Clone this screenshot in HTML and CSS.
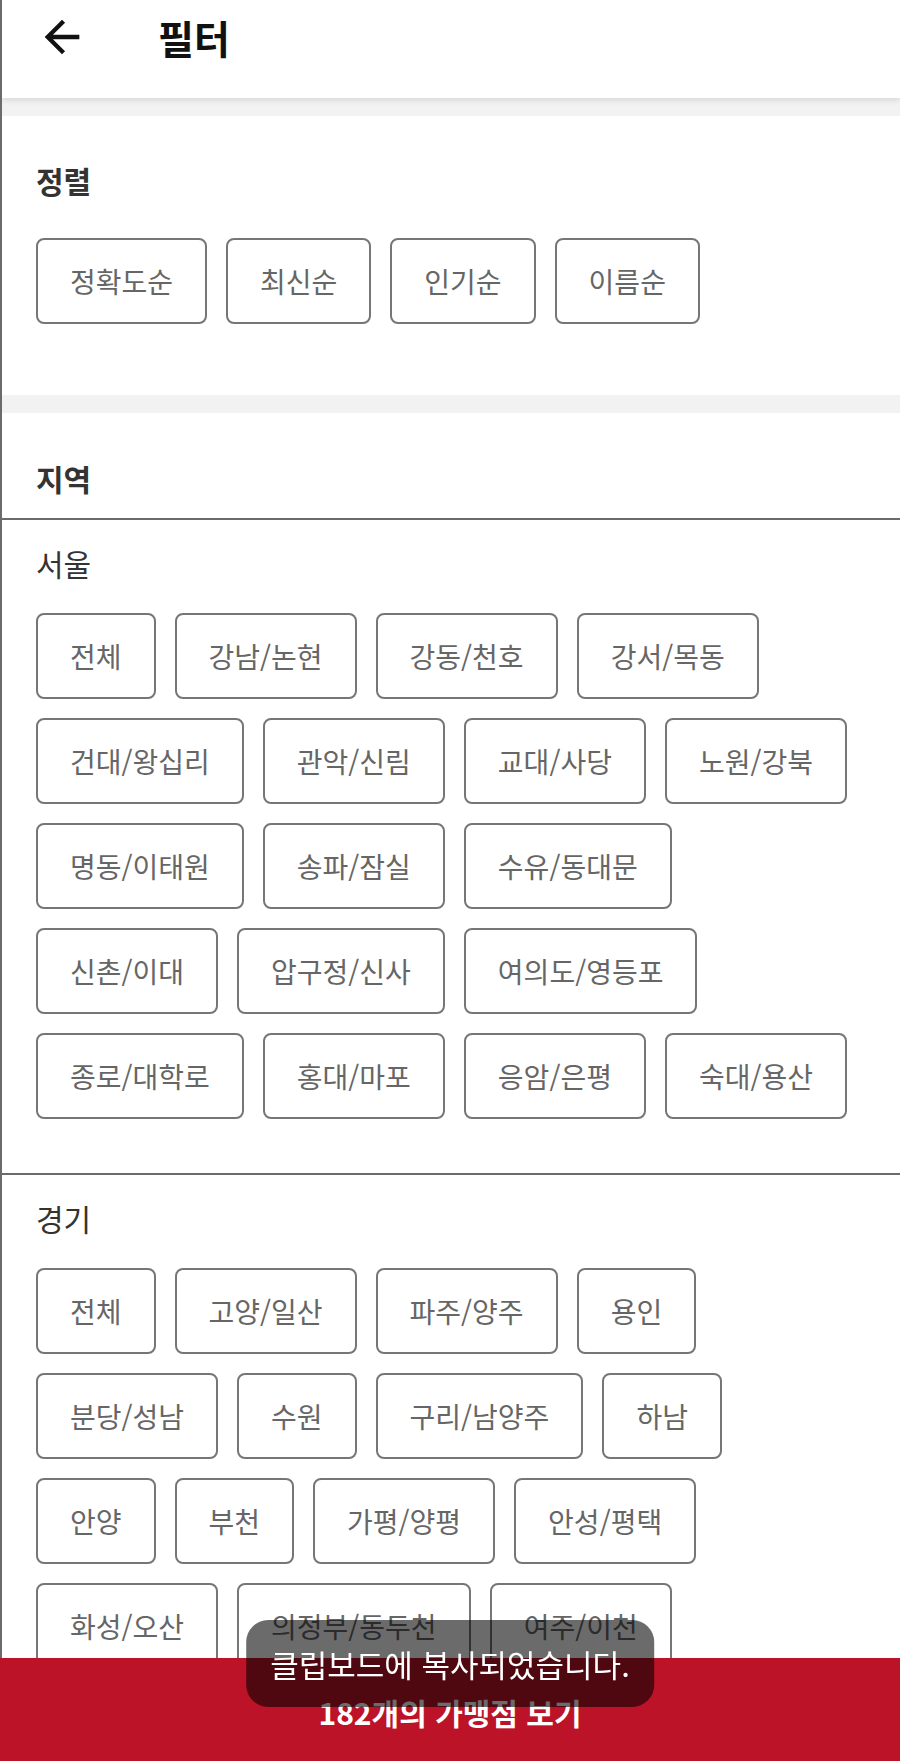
FILE: index.html
```html
<!DOCTYPE html>
<html lang="ko">
  <head>
    <meta charset="UTF-8" />
    <meta name="viewport" content="width=device-width, initial-scale=1.0" />
    <title>필터</title>
    <link rel="stylesheet" href="styles.css">
  </head>
  <body>
    <div class="page">
      <header class="topbar">
        <button class="back" aria-label="뒤로">
          <svg viewBox="0 0 24 24" width="52" height="52">
            <path d="M20 11H7.83l5.59-5.59L12 4l-8 8 8 8 1.41-1.41L7.83 13H20v-2z" fill="#111" />
          </svg>
        </button>
        <h1>필터</h1>
      </header>

      <section class="panel">
        <h2>정렬</h2>
        <div class="chips">
          <button class="chip">정확도순</button>
          <button class="chip">최신순</button>
          <button class="chip">인기순</button>
          <button class="chip">이름순</button>
        </div>
      </section>

      <section class="panel region">
        <h2>지역</h2>
        <div class="group">
          <h3>서울</h3>
          <div class="chips">
            <button class="chip">전체</button>
            <button class="chip">강남/논현</button>
            <button class="chip">강동/천호</button>
            <button class="chip">강서/목동</button>
            <button class="chip">건대/왕십리</button>
            <button class="chip">관악/신림</button>
            <button class="chip">교대/사당</button>
            <button class="chip">노원/강북</button>
            <button class="chip">명동/이태원</button>
            <button class="chip">송파/잠실</button>
            <button class="chip">수유/동대문</button>
            <button class="chip">신촌/이대</button>
            <button class="chip">압구정/신사</button>
            <button class="chip">여의도/영등포</button>
            <button class="chip">종로/대학로</button>
            <button class="chip">홍대/마포</button>
            <button class="chip">응암/은평</button>
            <button class="chip">숙대/용산</button>
          </div>
        </div>
        <div class="group">
          <h3>경기</h3>
          <div class="chips">
            <button class="chip">전체</button>
            <button class="chip">고양/일산</button>
            <button class="chip">파주/양주</button>
            <button class="chip">용인</button>
            <button class="chip">분당/성남</button>
            <button class="chip">수원</button>
            <button class="chip">구리/남양주</button>
            <button class="chip">하남</button>
            <button class="chip">안양</button>
            <button class="chip">부천</button>
            <button class="chip">가평/양평</button>
            <button class="chip">안성/평택</button>
            <button class="chip">화성/오산</button>
            <button class="chip">의정부/동두천</button>
            <button class="chip">여주/이천</button>
          </div>
        </div>
      </section>
    </div>

    <div class="toast">클립보드에 복사되었습니다.</div>
    <button class="cta">182개의 가맹점 보기</button>
  </body>
</html>
```

FILE: styles.css
```css
body {
  margin: 0;
  font-family: "Noto Sans CJK KR", "Noto Sans", sans-serif;
  background-color: #f2f2f2;
}
.page {
  border-left: 2px solid #6b6b6b;
  background-color: #f2f2f2;
  height: 1761px;
  overflow: hidden;
}
.topbar {
  position: relative;
  z-index: 1;
  display: flex;
  align-items: center;
  box-sizing: border-box;
  height: 98px;
  padding: 0 0 24px 34px;
  background-color: white;
  box-shadow: 0 2px 6px rgba(0, 0, 0, 0.12);
}
.back {
  display: flex;
  padding: 0;
  border: none;
  background: none;
}
h1 {
  margin: 0 0 0 70px;
  font-size: 39px;
  font-weight: 700;
  line-height: 1;
  color: #111;
}
.panel {
  margin-top: 18px;
  padding: 44px 50px 71px 34px;
  background-color: white;
}
h2 {
  margin: 0;
  font-size: 30px;
  font-weight: 700;
  line-height: 40px;
  color: #333;
}
h3 {
  margin: 0;
  font-size: 30px;
  font-weight: 400;
  line-height: 40px;
  color: #333;
}
.panel > .chips {
  margin-top: 38px;
}
.region {
  padding: 45px 0 0 0;
}
.region h2 {
  margin: 0 0 20px 34px;
}
.group {
  border-top: 2px solid #6b6b6b;
  padding: 23px 48px 54px 34px;
}
.group .chips {
  margin-top: 30px;
}
.chips {
  display: flex;
  flex-wrap: wrap;
  gap: 19px;
}
.chip {
  display: inline-flex;
  align-items: center;
  box-sizing: border-box;
  height: 86px;
  padding: 0 32px;
  border: 2px solid #767676;
  border-radius: 8px;
  background-color: white;
  font-family: inherit;
  font-size: 28px;
  line-height: 1;
  color: #666;
}
.toast {
  position: fixed;
  left: 50%;
  bottom: 54px;
  z-index: 3;
  transform: translateX(-50%);
  box-sizing: border-box;
  height: 87px;
  padding: 0 24px;
  display: flex;
  align-items: center;
  border-radius: 22px;
  background-color: rgba(0, 0, 0, 0.58);
  color: white;
  font-size: 31px;
  white-space: nowrap;
}
.cta {
  position: fixed;
  left: 0;
  right: 0;
  bottom: 0;
  z-index: 2;
  height: 103px;
  padding: 4px 0 0;
  border: none;
  background-color: #bd1328;
  color: white;
  font-family: inherit;
  font-size: 30px;
  font-weight: 700;
}
```
